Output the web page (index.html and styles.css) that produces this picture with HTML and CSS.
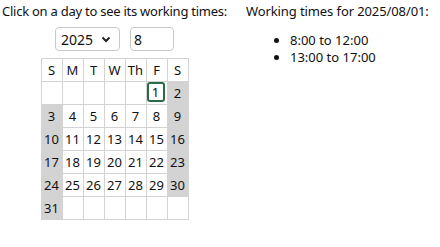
FILE: index.html
```html
<!DOCTYPE html>
<html>
  <head>
    <title>Working Times</title>
    <link rel="stylesheet" href="styles.css">
  </head>

  <body>
    <div class="page">
      <div class="picker">
        <p class="hint">Click on a day to see its working times:</p>

        <div class="controls">
          <div class="select-wrap">
            <select id="year">
              <option selected>2025</option>
            </select>
            <svg class="chevron" width="10" height="7" viewBox="0 0 10 7">
              <polyline points="1.5,1.5 5,5 8.5,1.5" fill="none" stroke="#222" stroke-width="2" />
            </svg>
          </div>
          <input type="text" id="month" value="8" />
        </div>

        <table class="calendar">
          <tr><th>S</th><th>M</th><th>T</th><th>W</th><th>Th</th><th>F</th><th>S</th></tr>
          <tr><td></td><td></td><td></td><td></td><td></td><td class="selected"><span>1</span></td><td class="weekend">2</td></tr>
          <tr><td class="weekend">3</td><td>4</td><td>5</td><td>6</td><td>7</td><td>8</td><td class="weekend">9</td></tr>
          <tr><td class="weekend">10</td><td>11</td><td>12</td><td>13</td><td>14</td><td>15</td><td class="weekend">16</td></tr>
          <tr><td class="weekend">17</td><td>18</td><td>19</td><td>20</td><td>21</td><td>22</td><td class="weekend">23</td></tr>
          <tr><td class="weekend">24</td><td>25</td><td>26</td><td>27</td><td>28</td><td>29</td><td class="weekend">30</td></tr>
          <tr><td class="weekend">31</td><td></td><td></td><td></td><td></td><td></td><td></td></tr>
        </table>
      </div>

      <div class="times">
        <p>Working times for 2025/08/01:</p>
        <ul>
          <li>8:00 to 12:00</li>
          <li>13:00 to 17:00</li>
        </ul>
      </div>
    </div>
  </body>
</html>
```

FILE: styles.css
```css
body {
  margin: 0;
  font-family: "Noto Sans", Arial, sans-serif;
  font-size: 13px;
  color: #111;
}

.page {
  display: flex;
  gap: 20px;
  padding: 2px 3px;
}

.picker {
  display: flex;
  flex-direction: column;
  align-items: center;
  width: 223px;
}

.picker p,
.times p {
  margin: 0;
  line-height: 18px;
  white-space: nowrap;
}

.picker .hint {
  letter-spacing: -0.25px;
}

.times p {
  letter-spacing: -0.1px;
}

.controls {
  display: flex;
  gap: 10px;
  margin-top: 7px;
}

.select-wrap {
  position: relative;
}

.select-wrap select,
.controls input {
  box-sizing: border-box;
  height: 24px;
  border: 1px solid #c8c8c8;
  border-radius: 4px;
  background-color: #ffffff;
  font-family: inherit;
  font-size: 14px;
  color: #111;
  padding: 0 5px;
}

.select-wrap select {
  width: 65px;
  appearance: none;
  -webkit-appearance: none;
}

.chevron {
  position: absolute;
  right: 9px;
  top: 9px;
  pointer-events: none;
}

.controls input {
  width: 44px;
  padding: 0 3px;
}

.calendar {
  margin-top: 7px;
  border-collapse: collapse;
}

.calendar th,
.calendar td {
  width: 20px;
  height: 22px;
  padding: 0;
  border: 1px solid #d3d3d3;
  text-align: center;
  font-weight: normal;
  font-size: 13px;
}

.calendar td.weekend {
  background-color: #d3d3d3;
}

.calendar td.selected span {
  display: block;
  box-sizing: border-box;
  height: 20px;
  margin: 0 2px 2px 0;
  line-height: 16px;
  border: 2px solid #2b6b48;
  border-radius: 3px;
}

.times ul {
  margin: 12px 0 0;
  padding-left: 44px;
}

.times li {
  line-height: 17px;
}
```
